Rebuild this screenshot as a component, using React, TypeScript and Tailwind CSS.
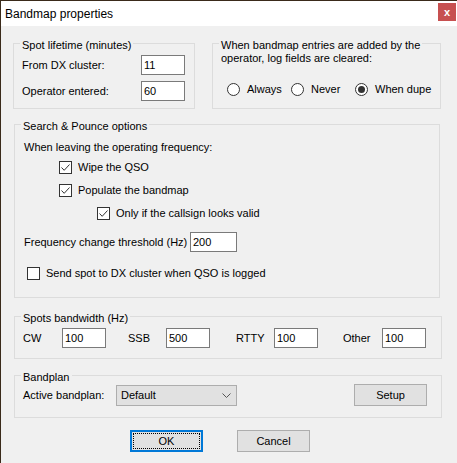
import { ReactNode } from "react";
import clsx from "clsx";

function Group({
  title,
  className,
  children,
}: {
  title: string;
  className?: string;
  children: ReactNode;
}) {
  return (
    <fieldset className={clsx("border border-[#dcdcdc] pl-[8px]", className)}>
      <legend className="-ml-[2px] px-[2px] pt-[4px] leading-[14px] whitespace-nowrap">{title}</legend>
      {children}
    </fieldset>
  );
}

function TextBox({ value, className }: { value: string; className?: string }) {
  return (
    <div
      className={clsx(
        "h-[20px] border border-[#7a7a7a] bg-white pl-[2px] flex items-center leading-[14px] shrink-0",
        className
      )}
    >
      {value}
    </div>
  );
}

function Radio({ label, checked }: { label: string; checked?: boolean }) {
  return (
    <div className="w-[64px] flex items-center gap-[7px] shrink-0">
      <span className="w-[13px] h-[13px] rounded-full border border-[#333333] bg-white flex items-center justify-center shrink-0">
        {checked && <span className="w-[7px] h-[7px] rounded-full bg-[#333333]" />}
      </span>
      <span className="whitespace-nowrap">{label}</span>
    </div>
  );
}

function Check({
  label,
  checked,
  className,
}: {
  label: string;
  checked?: boolean;
  className?: string;
}) {
  return (
    <div className={clsx("h-[14px] flex items-center gap-[6px]", className)}>
      <span className="w-[13px] h-[13px] border border-[#333333] bg-white flex items-center justify-center shrink-0">
        {checked && (
          <svg width="11" height="11" viewBox="0 0 11 11">
            <path d="M1.5 5.5 L4.2 8.3 L9.5 2.5" fill="none" stroke="#333333" strokeWidth="1" />
          </svg>
        )}
      </span>
      <span className="whitespace-nowrap">{label}</span>
    </div>
  );
}

function Button({
  label,
  focused,
  className,
}: {
  label: string;
  focused?: boolean;
  className?: string;
}) {
  return (
    <div
      className={clsx(
        "bg-[#e1e1e1] flex items-center justify-center shrink-0",
        focused ? "border-2 border-[#0078d7] p-[1px]" : "border border-[#adadad]",
        className
      )}
    >
      {focused ? (
        <div className="w-full h-full border border-dotted border-black flex items-center justify-center">
          {label}
        </div>
      ) : (
        label
      )}
    </div>
  );
}

export default function App() {
  return (
    <div className="w-[457px] h-[463px] bg-[#f0f0f0] border-l border-t border-[#3a2a1a] flex flex-col font-['Liberation_Sans',Arial,sans-serif] text-[11px] text-black">
      {/* title bar */}
      <div className="h-[25px] bg-white flex justify-between shrink-0">
        <span className="self-center pl-[4px] text-[12px]">Bandmap properties</span>
        <div className="mt-[2px] mr-[1px] w-[18px] h-[18px] bg-[#c75050] text-white font-bold text-[11px] leading-none flex items-center justify-center">
          x
        </div>
      </div>

      <div className="px-[12px] flex flex-col">
        <div className="mt-[8px] flex gap-[17px]">
          <Group title="Spot lifetime (minutes)" className="w-[182px]">
            <div className="pt-[3px] pb-[7px] flex flex-col gap-[6px]">
              <div className="flex items-center h-[20px]">
                <span className="w-[119px] whitespace-nowrap">From DX cluster:</span>
                <TextBox value="11" className="w-[44px]" />
              </div>
              <div className="flex items-center h-[20px]">
                <span className="w-[119px] whitespace-nowrap">Operator entered:</span>
                <TextBox value="60" className="w-[44px]" />
              </div>
            </div>
          </Group>
          <Group title="When bandmap entries are added by the" className="w-[229px]">
            <div className="leading-[13px] whitespace-nowrap">operator, log fields are cleared:</div>
            <div className="mt-[17px] ml-[6px] h-[14px] flex items-center">
              <Radio label="Always" />
              <Radio label="Never" />
              <Radio label="When dupe" checked />
            </div>
          </Group>
        </div>

        <Group title="Search & Pounce options" className="mt-[6px] ml-[1px] w-[426px]">
          <div className="flex flex-col pb-[17px]">
            <div className="mt-[7px] pl-[1px] leading-[14px]">When leaving the operating frequency:</div>
            <Check label="Wipe the QSO" checked className="mt-[6px] ml-[36px]" />
            <Check label="Populate the bandmap" checked className="mt-[9px] ml-[36px]" />
            <Check label="Only if the callsign looks valid" checked className="mt-[9px] ml-[74px]" />
            <div className="mt-[12px] flex items-center h-[20px]">
              <span className="w-[167px] pl-[1px] whitespace-nowrap">Frequency change threshold (Hz)</span>
              <TextBox value="200" className="w-[47px]" />
            </div>
            <Check label="Send spot to DX cluster when QSO is logged" className="mt-[14px] ml-[4px]" />
          </div>
        </Group>

        <Group title="Spots bandwidth (Hz)" className="mt-[9px] ml-[1px] w-[428px]">
          <div className="pt-[3px] pb-[10px] flex items-center">
            <span className="w-[39px]">CW</span>
            <TextBox value="100" className="w-[44px]" />
            <span className="ml-[22px] w-[38px]">SSB</span>
            <TextBox value="500" className="w-[44px]" />
            <span className="ml-[26px] w-[38px]">RTTY</span>
            <TextBox value="100" className="w-[44px]" />
            <span className="ml-[25px] w-[39px]">Other</span>
            <TextBox value="100" className="w-[44px]" />
          </div>
        </Group>

        <Group title="Bandplan" className="mt-[7px] ml-[1px] w-[428px] pr-[14px]">
          <div className="pb-[11px] flex items-start">
            <span className="w-[93px] mt-[1px] h-[21px] flex items-center whitespace-nowrap">Active bandplan:</span>
            <div className="mt-[1px] w-[121px] h-[21px] bg-[#e1e1e1] border border-[#adadad] pl-[4px] pr-[5px] flex items-center justify-between">
              <span>Default</span>
              <svg width="9" height="6" viewBox="0 0 9 6">
                <path d="M0.5 0.5 L4.5 4.5 L8.5 0.5" fill="none" stroke="#555555" strokeWidth="1" />
              </svg>
            </div>
            <Button label="Setup" className="ml-auto w-[73px] h-[22px]" />
          </div>
        </Group>

        <div className="mt-[12px] pl-[117px] flex gap-[34px]">
          <Button label="OK" focused className="w-[73px] h-[22px]" />
          <Button label="Cancel" className="w-[73px] h-[22px]" />
        </div>
      </div>
    </div>
  );
}
